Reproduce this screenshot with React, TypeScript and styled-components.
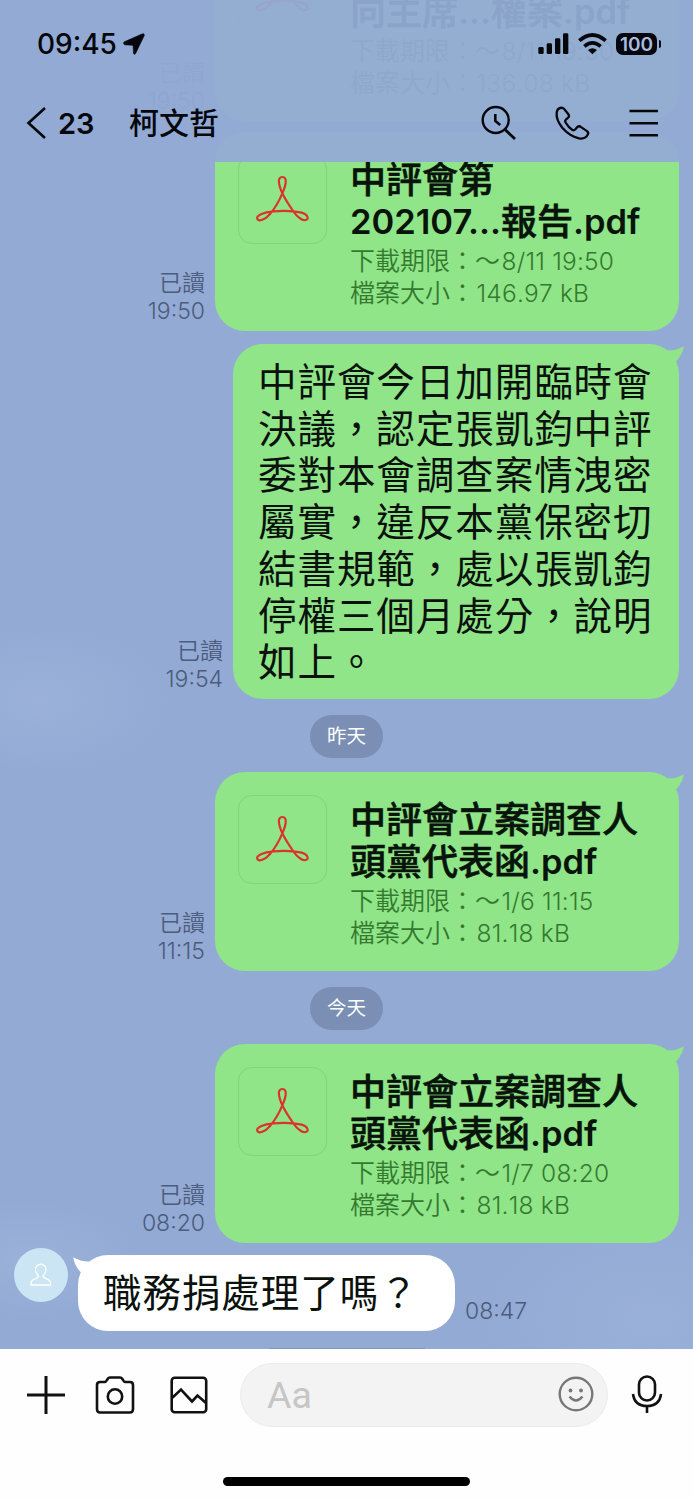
import React from "react";
import styled, { createGlobalStyle } from "styled-components";

const GlobalStyle = createGlobalStyle`
  * { box-sizing: border-box; }
  body { margin: 0; background: #fff; }
`;

const Screen = styled.div`
  position: relative;
  display: flex;
  flex-direction: column;
  width: 693px;
  height: 1500px;
  overflow: hidden;
  font-family: Inter, "Noto Sans CJK TC", sans-serif;
  color: #0b110d;
`;

/* ---------- header ---------- */

const Header = styled.header`
  position: absolute;
  inset: 0 0 auto 0;
  height: 162px;
  display: flex;
  flex-direction: column;
  background: rgba(147, 170, 213, 0.945);
  color: #05070c;
`;

const StatusBar = styled.div`
  display: flex;
  align-items: center;
  height: 88px;
  padding: 0 32px 0 37px;
`;

const Clock = styled.span`
  width: 86px;
  font-size: 28px;
  font-weight: 500;
  white-space: nowrap;
`;

const StatusIcons = styled.div`
  display: flex;
  align-items: center;
  gap: 9px;
  margin-left: auto;
`;

const Battery = styled.div`
  position: relative;
  display: flex;
  align-items: center;
  justify-content: center;
  width: 41px;
  height: 22px;
  margin-right: 4px;
  border-radius: 7px;
  background: #05070c;
  color: #a9bce0;
  font-size: 19px;
  font-weight: 600;
  &::after {
    content: "";
    position: absolute;
    right: -4px;
    top: 7px;
    width: 2.5px;
    height: 8px;
    border-radius: 0 3px 3px 0;
    background: #05070c;
  }
`;

const NavBar = styled.div`
  display: flex;
  align-items: center;
  height: 70px;
  padding: 0 34px 0 26px;
`;

const Unread = styled.span`
  width: 71px;
  margin-left: 11px;
  font-size: 29px;
  font-weight: 600;
`;

const ChatName = styled.h1`
  margin: 0;
  font-size: 30px;
  font-weight: 500;
  line-height: 44px;
`;

const NavActions = styled.div`
  display: flex;
  align-items: center;
  gap: 36.5px;
  margin-left: auto;
`;

/* ---------- conversation ---------- */

const Conversation = styled.main`
  display: flex;
  flex-direction: column;
  justify-content: flex-end;
  height: 1349px;
  overflow: hidden;
  background:
    radial-gradient(ellipse 130px 75px at 40px 700px, rgba(166, 188, 222, 0.4), transparent),
    radial-gradient(ellipse 110px 60px at 30px 1260px, rgba(166, 188, 222, 0.4), transparent),
    radial-gradient(ellipse 170px 110px at 650px 1320px, rgba(166, 188, 222, 0.35), transparent),
    #93aad5;
`;

const Row = styled.div<{ $incoming?: boolean; $gap: number }>`
  display: flex;
  flex: none;
  align-items: flex-end;
  justify-content: ${(p) => (p.$incoming ? "flex-start" : "flex-end")};
  gap: 10px;
  margin-top: ${(p) => p.$gap}px;
  padding: 0 14px;
`;

const Meta = styled.div`
  display: flex;
  flex-direction: column;
  align-items: flex-end;
  margin-bottom: 6px;
  color: #4c5c7c;
  font-size: 23px;
  font-weight: 350;
  font-kerning: none;
  line-height: 27.5px;
  white-space: nowrap;
`;

const Bubble = styled.div<{ $incoming?: boolean }>`
  position: relative;
  flex: none;
  border-radius: 30px;
  background: ${(p) => (p.$incoming ? "#fff" : "#8fe588")};
`;

const Tail = styled.svg<{ $incoming?: boolean }>`
  position: absolute;
  top: 2px;
  ${(p) => (p.$incoming ? "left: -5px;" : "right: -5px;")}
  transform: ${(p) => (p.$incoming ? "scaleX(-1)" : "none")};
`;

const FileBubble = styled(Bubble)`
  display: flex;
  gap: 23px;
  width: 464px;
  height: 199px;
  padding: 23px 0 0 23px;
`;

const FileIcon = styled.div`
  flex: none;
  width: 89px;
  height: 89px;
  border: 1.5px solid #81d37c;
  border-radius: 14px;
  svg { display: block; margin: -1.5px; }
`;

const FileText = styled.div`
  padding-top: 4px;
  white-space: nowrap;
`;

const FileTitle = styled.div`
  margin-bottom: 2px;
  color: #08140a;
  font-size: 36px;
  font-weight: 500;
  -webkit-text-stroke: 0.6px currentColor;
  line-height: 42px;
`;

const TitleLatin = styled.span`
  position: relative;
  top: -1px;
  font-size: 34.5px;
  font-weight: 600;
  line-height: 1;
  -webkit-text-stroke: 0;
`;

const FileInfo = styled.div`
  height: 32px;
  color: #35792f;
  font-size: 25px;
  font-weight: 350;
  line-height: 32px;
`;

const InfoLatin = styled.span`
  margin-left: 1.5px;
  font-size: 24.5px;
  font-kerning: none;
  line-height: 1;
  letter-spacing: 0.2px;
`;

const TextBubble = styled(Bubble)<{ $w: number }>`
  width: ${(p) => p.$w}px;
  padding: ${(p) => (p.$incoming ? "14.5px 0 14.8px 25px" : "15px 0 13px 25px")};
  font-size: 38.5px;
  letter-spacing: 0.95px;
  line-height: 46.7px;
  white-space: nowrap;
`;

const DatePill = styled.div`
  flex: none;
  align-self: center;
  width: 73px;
  height: 43px;
  margin-top: 16px;
  margin-bottom: 1px;
  border-radius: 22px;
  background: #7a8fb3;
  color: #fff;
  font-size: 19.5px;
  line-height: 42px;
  text-align: center;
`;

const Avatar = styled.div`
  display: flex;
  align-items: center;
  justify-content: center;
  align-self: flex-start;
  width: 54px;
  height: 54px;
  margin-top: -7px;
  border-radius: 50%;
  background: #cbe5f5;
`;

const NextPeek = styled.div`
  flex: none;
  align-self: center;
  width: 156px;
  height: 1px;
  margin-top: 17px;
  background: #8297bc;
`;

/* ---------- composer ---------- */

const Composer = styled.footer`
  display: flex;
  flex-direction: column;
  align-items: center;
  height: 151px;
  background: #fefefe;
`;

const Tools = styled.div`
  display: flex;
  align-items: center;
  width: 100%;
  height: 92px;
  padding: 0 30px 0 26px;
`;

const Attachments = styled.div`
  display: flex;
  align-items: center;
  justify-content: space-between;
  width: 182px;
  svg:nth-child(2) { margin-right: 6px; }
`;

const Input = styled.div`
  display: flex;
  flex: none;
  align-items: center;
  justify-content: space-between;
  width: 368px;
  height: 64px;
  margin: 0 23px 0 32px;
  padding: 0 13px 0 26px;
  border: 1px solid #ececec;
  border-radius: 32px;
  background: #f3f3f3;
  color: #c6c6c6;
  font-family: Roboto, sans-serif;
  font-size: 37.5px;
  svg { position: relative; top: -1px; }
`;

const HomeBar = styled.div`
  width: 247px;
  height: 9px;
  margin-top: 36px;
  border-radius: 5px;
  background: #000;
`;

/* ---------- icons ---------- */

const LocationIcon = () => (
  <svg width="22" height="22" viewBox="369 100 67 67">
    <path d="M434 107Q434 100 427 103L373 127Q368 131 374 136L396 137Q400 137 400 141L401 161Q402 168 407 163Z" fill="#05070c" stroke="#05070c" strokeWidth="2" />
  </svg>
);

const SignalIcon = () => (
  <svg width="31" height="22" viewBox="582 100 93 66" fill="#05070c">
    <rect x="583" y="142" width="16" height="21" rx="4" />
    <rect x="608" y="131" width="16" height="32" rx="4" />
    <rect x="633" y="116" width="16" height="47" rx="4" />
    <rect x="657" y="101" width="16" height="62" rx="4" />
  </svg>
);

const WifiIcon = () => (
  <svg width="29" height="22" viewBox="0 0 87 66" fill="none" stroke="#05070c" strokeWidth="11">
    <path d="M4 23Q43-11 83 23" />
    <path d="M19 40Q43 19 68 40" />
    <path d="M43 64L30 51Q43 41 57 51Z" fill="#05070c" stroke="none" />
  </svg>
);

const BackIcon = () => (
  <svg width="21" height="34" viewBox="0 0 21 34" fill="none" stroke="#05070c" strokeWidth="2.600">
    <path d="M19 2L2.500 17L19 32" />
  </svg>
);

const SearchIcon = () => (
  <svg width="36" height="36" viewBox="481 104 36 36" fill="none" stroke="#05070c" strokeWidth="2.400">
    <circle cx="495.700" cy="119" r="13" />
    <path d="M505 128.500L515 138" strokeWidth="2.800" />
    <path d="M495.300 113V120L500.200 124" strokeWidth="2.600" />
  </svg>
);

const PhoneIcon = () => (
  <svg width="38" height="38" viewBox="2 0 115 115" fill="none" stroke="#05070c" strokeWidth="7" strokeLinejoin="round">
    <path d="M13 17Q22 7 32 14L46 32Q50 38 44 42L38 47Q34 51 37 56Q46 71 57 78Q62 81 66 77L72 70Q78 65 84 70L102 82Q108 87 104 93Q96 107 78 104Q50 98 27 72Q8 48 10 27Q11 21 13 17Z" />
  </svg>
);

const MenuIcon = () => (
  <svg width="31" height="30" viewBox="0 0 31 30" stroke="#05070c" strokeWidth="2.600">
    <path d="M1.500 3H30M1.500 15.200H30M1.500 27.300H30" />
  </svg>
);

const PdfIcon = () => (
  <svg width="89" height="89" viewBox="84 103 267 267" fill="none" stroke="#d9352a" strokeWidth="6.500">
    <path d="M217 218C207 195 200 169 217 169C234 169 227 195 217 218C208 240 195 262 180 280C165 298 146 303 142 295C137 285 160 274 190 272C215 270 250 270 275 276C293 281 296 292 290 297C280 303 262 290 250 272C236 252 225 235 217 218Z" />
  </svg>
);

const BubbleTail = ({ incoming }: { incoming?: boolean }) => (
  <Tail $incoming={incoming} width="24" height="24" viewBox="0 0 24 24" fill={incoming ? "#fff" : "#8fe588"}>
    <path d="M3 6L8 4.500Q17 4.500 23.800 0.300Q22.500 9 16 15.500L8 22Z" />
  </Tail>
);

const PersonIcon = () => (
  <svg width="24" height="24" viewBox="0 0 24 24" fill="none" stroke="#fff" strokeWidth="1.300" strokeLinejoin="round">
    <path d="M9.500 13Q6.500 10 6.500 6.500A5 5 0 0 1 17 6.500Q17 10 14 13Q14.500 15 17.500 15.800Q22 17 21.700 22H2Q1.500 17 6 15.800Q9 15 9.500 13Z" />
  </svg>
);

const PlusIcon = () => (
  <svg width="40" height="40" viewBox="0 0 40 40" stroke="#111" strokeWidth="3">
    <path d="M1 20H39M20 1V39" />
  </svg>
);

const CameraIcon = () => (
  <svg width="40" height="40" viewBox="0 0 40 40" fill="none" stroke="#111" strokeWidth="2.600" strokeLinejoin="round">
    <path d="M5 7H9.500Q11 7 12 5L13 3.500Q13.500 2.500 15 2.500H25Q26.500 2.500 27 3.500L28 5Q29 7 30.500 7H35Q38 7 38 10V34Q38 37.500 35 37.500H5Q2 37.500 2 34V10Q2 7 5 7Z" />
    <circle cx="20" cy="21.500" r="7.200" />
  </svg>
);

const PictureIcon = () => (
  <svg width="38" height="38" viewBox="0 0 38 38" fill="none" stroke="#111" strokeWidth="2.600">
    <rect x="1.700" y="1.700" width="34.500" height="34.500" rx="3" />
    <path d="M2 22L11 13.500L22 25.500L27.500 19.500L36 27" />
  </svg>
);

const SmileIcon = () => (
  <svg width="36" height="36" viewBox="0 0 36 36" fill="none" stroke="#777" strokeWidth="2.400">
    <circle cx="18" cy="18" r="16.300" />
    <path d="M11.500 20.500Q18 28.500 24.500 20.500" />
    <circle cx="12.500" cy="14.500" r="1.900" fill="#777" stroke="none" />
    <circle cx="23" cy="14.500" r="1.900" fill="#777" stroke="none" />
  </svg>
);

const MicIcon = () => (
  <svg width="32" height="40" viewBox="0 1.500 32 40" fill="none" stroke="#111" strokeWidth="2.600">
    <rect x="8" y="3" width="16" height="24" rx="8" />
    <path d="M2 20.500Q3.500 32.500 16 32.500Q28.500 32.500 30 20.500" />
    <path d="M16 32V39.500" />
  </svg>
);

/* ---------- messages ---------- */

interface FileMessageProps {
  title: React.ReactNode;
  expires: string;
  size: string;
  time: string;
  gap: number;
  tail?: boolean;
}

const FileMessage = ({ title, expires, size, time, gap, tail }: FileMessageProps) => (
  <Row $gap={gap}>
    <Meta>
      <span>已讀</span>
      <span>{time}</span>
    </Meta>
    <FileBubble>
      {tail && <BubbleTail />}
      <FileIcon><PdfIcon /></FileIcon>
      <FileText>
        <FileTitle>{title}</FileTitle>
        <FileInfo>下載期限：～<InfoLatin>{expires}</InfoLatin></FileInfo>
        <FileInfo>檔案大小：<InfoLatin>{size}</InfoLatin></FileInfo>
      </FileText>
    </FileBubble>
  </Row>
);

const surveyTitle = (
  <>中評會立案調查人<br />頭黨代表函<TitleLatin>.pdf</TitleLatin></>
);

const noticeLines = [
  "中評會今日加開臨時會",
  "決議，認定張凱鈞中評",
  "委對本會調查案情洩密",
  "屬實，違反本黨保密切",
  "結書規範，處以張凱鈞",
  "停權三個月處分，說明",
  "如上。",
];

export default function App() {
  return (
    <Screen>
      <GlobalStyle />
      <Conversation>
        <FileMessage
          gap={0}
          title={<>中評會決議<br />向主席<TitleLatin>...</TitleLatin>權案<TitleLatin>.pdf</TitleLatin></>}
          expires="8/11 19:50"
          size="136.08 kB"
          time="19:50"
        />
        <FileMessage
          gap={11}
          title={<>中評會第<br /><TitleLatin>202107...</TitleLatin>報告<TitleLatin>.pdf</TitleLatin></>}
          expires="8/11 19:50"
          size="146.97 kB"
          time="19:50"
        />
        <Row $gap={13}>
          <Meta>
            <span>已讀</span>
            <span>19:54</span>
          </Meta>
          <TextBubble $w={446}>
            <BubbleTail />
            {noticeLines.map((line) => <div key={line}>{line}</div>)}
          </TextBubble>
        </Row>
        <DatePill>昨天</DatePill>
        <FileMessage gap={13} tail title={surveyTitle} expires="1/6 11:15" size="81.18 kB" time="11:15" />
        <DatePill>今天</DatePill>
        <FileMessage gap={13} tail title={surveyTitle} expires="1/7 08:20" size="81.18 kB" time="08:20" />
        <Row $incoming $gap={12}>
          <Avatar><PersonIcon /></Avatar>
          <TextBubble $incoming $w={377}>
            <BubbleTail incoming />
            職務捐處理了嗎？
          </TextBubble>
          <Meta>08:47</Meta>
        </Row>
        <NextPeek />
      </Conversation>

      <Composer>
        <Tools>
          <Attachments>
            <PlusIcon />
            <CameraIcon />
            <PictureIcon />
          </Attachments>
          <Input>Aa<SmileIcon /></Input>
          <MicIcon />
        </Tools>
        <HomeBar />
      </Composer>

      <Header>
        <StatusBar>
          <Clock>09:45</Clock>
          <LocationIcon />
          <StatusIcons>
            <SignalIcon />
            <WifiIcon />
            <Battery>100</Battery>
          </StatusIcons>
        </StatusBar>
        <NavBar>
          <BackIcon />
          <Unread>23</Unread>
          <ChatName>柯文哲</ChatName>
          <NavActions>
            <SearchIcon />
            <PhoneIcon />
            <MenuIcon />
          </NavActions>
        </NavBar>
      </Header>
    </Screen>
  );
}
